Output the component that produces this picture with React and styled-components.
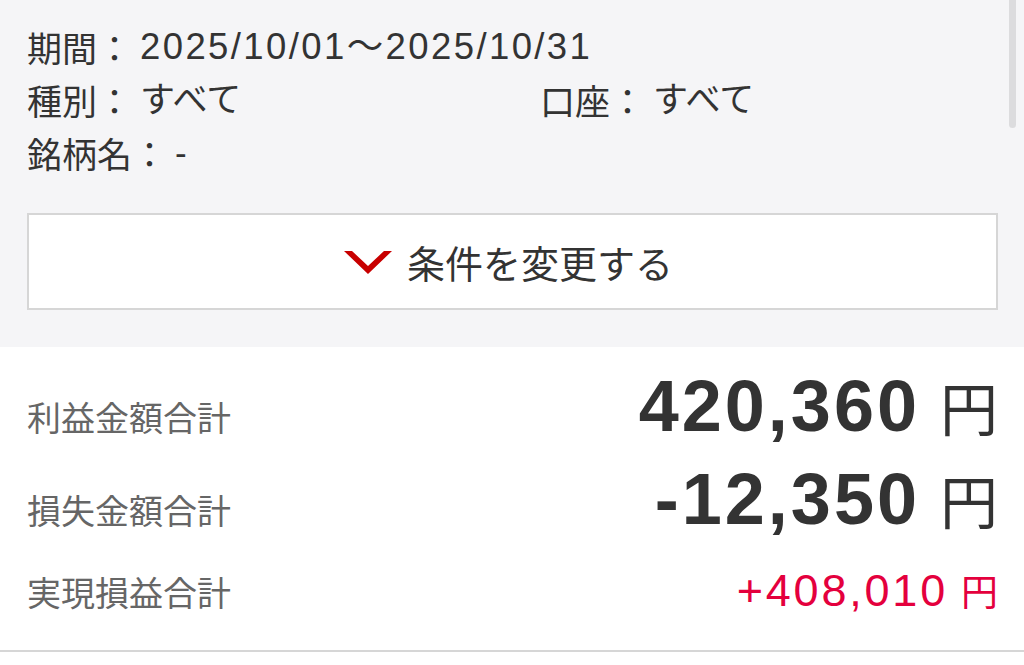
import React from "react";
import styled, { createGlobalStyle } from "styled-components";

const FONT = `"Liberation Sans", "Noto Sans CJK JP", sans-serif`;
const CJK = `"Noto Sans CJK JP", sans-serif`;

const Global = createGlobalStyle`
  html, body { margin: 0; padding: 0; background: #ffffff; }
  body { font-family: ${FONT}; color: #333333; -webkit-font-smoothing: antialiased; }
`;

const Page = styled.div`
  position: relative;
  width: 1024px;
  height: 665px;
  overflow: hidden;
  background: #ffffff;
`;

const Filter = styled.section`
  background: #f5f5f7;
  padding: 20px 26px 37px 27px;
`;

const InfoGrid = styled.div`
  display: grid;
  grid-template-columns: 513px 1fr;
  grid-auto-rows: 53px;
  font-size: 35px;
  color: #333333;
`;

const Field = styled.div`
  display: flex;
  align-items: center;
  height: 53px;
  overflow: hidden;
  white-space: nowrap;
  grid-column: ${(p) => (p.$wide ? "1 / -1" : "auto")};
`;

const FieldLabel = styled.span`
  font-family: ${CJK};
  line-height: 53px;
`;

const FieldValue = styled.span`
  margin-left: 8px;
  line-height: 53px;
  font-size: ${(p) => (p.$spaced ? "36.5px" : "35px")};
  letter-spacing: ${(p) => (p.$spaced ? "2.4px" : "0")};
`;

const ChangeButton = styled.button`
  margin-top: 34px;
  width: 100%;
  height: 97px;
  box-sizing: border-box;
  border: 2px solid #d6d6d6;
  border-radius: 0;
  background: #ffffff;
  padding: 0 8px 0 0;
  display: flex;
  align-items: center;
  justify-content: center;
  gap: 15px;
  font-family: ${CJK};
  font-size: 38px;
  color: #333333;
`;

const Chevron = styled.svg`
  width: 48px;
  height: 23px;
  flex: none;
  margin-top: 2px;
`;

const Summary = styled.section`
  padding: 0 26px 37px 27px;
  border-bottom: 2px solid #d6d6d6;
`;

const SumRow = styled.div`
  display: flex;
  justify-content: space-between;
  align-items: baseline;
  padding-top: ${(p) => p.$pt}px;
`;

const SumLabel = styled.span`
  font-family: ${CJK};
  font-size: 34px;
  line-height: 1;
  color: #666666;
`;

const Amount = styled.span`
  display: flex;
  align-items: baseline;
  white-space: nowrap;
  color: ${(p) => (p.$plus ? "#e4003d" : "#333333")};
`;

const Digits = styled.span`
  font-family: "Liberation Sans", sans-serif;
  font-size: ${(p) => p.$size}px;
  font-weight: ${(p) => (p.$bold ? 700 : 400)};
  letter-spacing: ${(p) => p.$ls}px;
  line-height: 1;
`;

const Yen = styled.span`
  font-family: ${CJK};
  font-size: ${(p) => p.$size}px;
  margin-left: ${(p) => p.$gap}px;
  line-height: 1;
`;

const ScrollThumb = styled.div`
  position: absolute;
  top: -20px;
  right: 8px;
  width: 7px;
  height: 148px;
  border-radius: 4px;
  background: #dcdcde;
`;

const rows = [
  { label: "利益金額合計", value: "420,360", pt: 23, big: true },
  { label: "損失金額合計", value: "-12,350", pt: 21, big: true },
  { label: "実現損益合計", value: "+408,010", pt: 33, big: false, plus: true },
];

export default function App() {
  return (
    <Page>
      <Global />
      <Filter>
        <InfoGrid>
          <Field $wide>
            <FieldLabel>期間：</FieldLabel>
            <FieldValue $spaced>2025/10/01～2025/10/31</FieldValue>
          </Field>
          <Field>
            <FieldLabel>種別：</FieldLabel>
            <FieldValue>すべて</FieldValue>
          </Field>
          <Field>
            <FieldLabel>口座：</FieldLabel>
            <FieldValue>すべて</FieldValue>
          </Field>
          <Field $wide>
            <FieldLabel>銘柄名：</FieldLabel>
            <FieldValue>-</FieldValue>
          </Field>
        </InfoGrid>
        <ChangeButton type="button">
          <Chevron viewBox="0 0 48 23" aria-hidden="true">
            <polygon points="0,0 8,0 24,15 40,0 48,0 24,23" fill="#c80000" />
          </Chevron>
          条件を変更する
        </ChangeButton>
      </Filter>
      <Summary>
        {rows.map((r) => (
          <SumRow key={r.label} $pt={r.pt}>
            <SumLabel>{r.label}</SumLabel>
            <Amount $plus={r.plus}>
              <Digits $size={r.big ? 72 : 45} $bold={r.big} $ls={r.big ? 3 : 2.8}>
                {r.value}
              </Digits>
              <Yen $size={r.big ? 58 : 37} $gap={r.big ? 20 : 13}>
                円
              </Yen>
            </Amount>
          </SumRow>
        ))}
      </Summary>
      <ScrollThumb />
    </Page>
  );
}
